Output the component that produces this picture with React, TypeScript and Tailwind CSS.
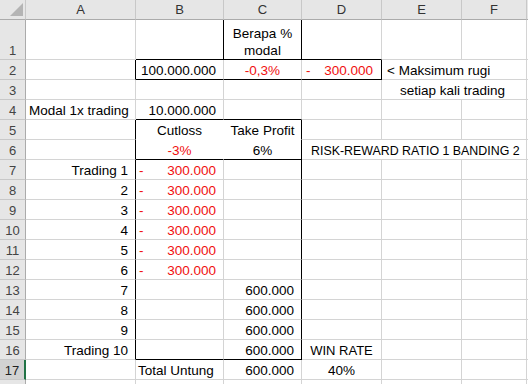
import React from 'react';

type Edge = 'k' | 'w' | undefined;

interface CellSpec {
  t?: string;
  align?: 'l' | 'r' | 'c';
  red?: boolean;
  dash?: boolean;
  r?: Edge;
  b?: Edge;
  span?: 2 | 3;
  pad?: string;
  size?: string;
  lines?: string[];
}

interface RowSpec {
  n: string;
  tall?: boolean;
  selected?: boolean;
  cells: CellSpec[];
}

const loss = (label: string): CellSpec[] => [
  { t: label, align: 'r', r: 'k' },
  { t: '300.000', dash: true, red: true },
  { r: 'k' },
  {},
  {},
  {},
];

const win = (label: string, last?: boolean): CellSpec[] => [
  { t: label, align: 'r', r: 'k' },
  { b: last ? 'k' : undefined },
  { t: '600.000', align: 'r', r: 'k', b: last ? 'k' : undefined },
  last ? { t: 'WIN RATE', align: 'c', size: 'text-[13px]' } : {},
  {},
  {},
];

const rows: RowSpec[] = [
  {
    n: '1',
    tall: true,
    cells: [
      {},
      { r: 'k', b: 'k' },
      { lines: ['Berapa %', 'modal'], align: 'c', r: 'k', b: 'k' },
      { b: 'k' },
      {},
      {},
    ],
  },
  {
    n: '2',
    cells: [
      { r: 'k' },
      { t: '100.000.000', align: 'r', b: 'k' },
      { t: '-0,3%', align: 'c', red: true, b: 'k' },
      { t: '300.000', dash: true, red: true, b: 'k', r: 'k', pad: 'pl-[4px] pr-[8px]' },
      { t: '< Maksimum rugi', span: 2, pad: 'pl-[5px]' },
    ],
  },
  {
    n: '3',
    cells: [{}, {}, {}, {}, { t: 'setiap kali trading', span: 2, pad: 'pl-[18px]' }],
  },
  {
    n: '4',
    cells: [
      { t: 'Modal 1x trading', align: 'l' },
      { t: '10.000.000', align: 'r', b: 'k' },
      { b: 'k' },
      {},
      {},
      {},
    ],
  },
  {
    n: '5',
    cells: [
      { r: 'k' },
      { t: 'Cutloss', align: 'c', r: 'w', b: 'w' },
      { t: 'Take Profit', align: 'c', r: 'k', b: 'w' },
      {},
      {},
      {},
    ],
  },
  {
    n: '6',
    cells: [
      { r: 'k' },
      { t: '-3%', align: 'c', red: true, r: 'w', b: 'k' },
      { t: '6%', align: 'c', r: 'k', b: 'k' },
      { t: 'RISK-REWARD RATIO 1 BANDING 2', span: 3, pad: 'pl-[9px]', size: 'text-[12.4px]' },
    ],
  },
  { n: '7', cells: loss('Trading 1') },
  { n: '8', cells: loss('2') },
  { n: '9', cells: loss('3') },
  { n: '10', cells: loss('4') },
  { n: '11', cells: loss('5') },
  { n: '12', cells: loss('6') },
  { n: '13', cells: win('7') },
  { n: '14', cells: win('8') },
  { n: '15', cells: win('9') },
  { n: '16', cells: win('Trading 10', true) },
  {
    n: '17',
    selected: true,
    cells: [
      {},
      { t: 'Total Untung', align: 'l', pad: 'pl-[2px]' },
      { t: '600.000', align: 'r' },
      { t: '40%', align: 'c' },
      {},
      {},
    ],
  },
  { n: '', cells: [{}, {}, {}, {}, {}, {}] },
];

const Cell = ({ c, tall }: { c: CellSpec; tall?: boolean }) => {
  const rc = c.r === 'k' ? 'border-r-black' : c.r === 'w' ? 'border-r-white' : 'border-r-[#d4d4d4]';
  const bc = c.b === 'k' ? 'border-b-black' : c.b === 'w' ? 'border-b-white' : 'border-b-[#d4d4d4]';
  const span = c.span === 3 ? 'col-span-3' : c.span === 2 ? 'col-span-2' : '';
  const justify = c.align === 'r' ? 'justify-end' : c.align === 'c' ? 'justify-center' : 'justify-start';
  const pad = c.pad ?? (c.align === 'r' ? 'pr-[7px]' : c.align === 'c' ? '' : 'pl-[3px]');
  const color = c.red ? 'text-[#f01010]' : 'text-black';

  return (
    <div
      className={`${tall ? 'h-[40px]' : 'h-[20px]'} ${span} ${rc} ${bc} flex items-end border-r border-b whitespace-nowrap ${color} ${c.size ?? ''}`}
    >
      {c.dash ? (
        <div className={`flex w-full justify-between leading-[16px] ${c.pad ?? 'pl-[3px] pr-[7px]'}`}>
          <span>-</span>
          <span>{c.t}</span>
        </div>
      ) : c.lines ? (
        <div className="w-full text-center leading-[17px]">
          {c.lines.map((l) => (
            <div key={l}>{l}</div>
          ))}
        </div>
      ) : (
        <div className={`flex w-full leading-[16px] ${justify} ${pad}`}>{c.t}</div>
      )}
    </div>
  );
};

export default function App() {
  const cols = ['A', 'B', 'C', 'D', 'E', 'F'];

  return (
    <div className="h-[384px] w-[528px] overflow-hidden bg-white font-['Liberation_Sans',Arial,sans-serif] text-[13.5px]">
      <div className="grid grid-cols-[26px_110px_88px_78px_80px_80px_65px_1fr]">
        {/* corner */}
        <div className="relative h-[20px] border-r border-b border-r-[#c8c8c8] border-b-[#ababab] bg-[#e6e6e6]">
          <svg className="absolute left-[10px] top-[3px]" width="13" height="13" viewBox="0 0 13 13">
            <polygon points="13,0 13,13 0,13" fill="#b4b4b4" />
          </svg>
        </div>
        {cols.map((l) => (
          <div
            key={l}
            className="flex h-[20px] items-center justify-center border-r border-b border-r-[#c8c8c8] border-b-[#ababab] bg-[#e6e6e6] text-[13px] leading-[16px] text-[#333]"
          >
            {l}
          </div>
        ))}
        <div className="h-[20px] border-b border-b-[#ababab] bg-[#e6e6e6]" />

        {rows.map((row, idx) => (
          <React.Fragment key={idx}>
            <div
              className={`${row.tall ? 'h-[40px]' : 'h-[20px]'} flex items-end justify-center border-b border-b-[#c8c8c8] leading-[16px] text-[13px] ${
                row.selected
                  ? 'border-r-2 border-r-[#217346] bg-[#d2d2d2] text-[#222]'
                  : 'border-r border-r-[#ababab] bg-[#e6e6e6] text-[#444]'
              }`}
            >
              {row.n}
            </div>
            {row.cells.map((c, i) => (
              <Cell key={i} c={c} tall={row.tall} />
            ))}
            <div className={`${row.tall ? 'h-[40px]' : 'h-[20px]'} border-b border-b-[#d4d4d4]`} />
          </React.Fragment>
        ))}
      </div>
    </div>
  );
}
